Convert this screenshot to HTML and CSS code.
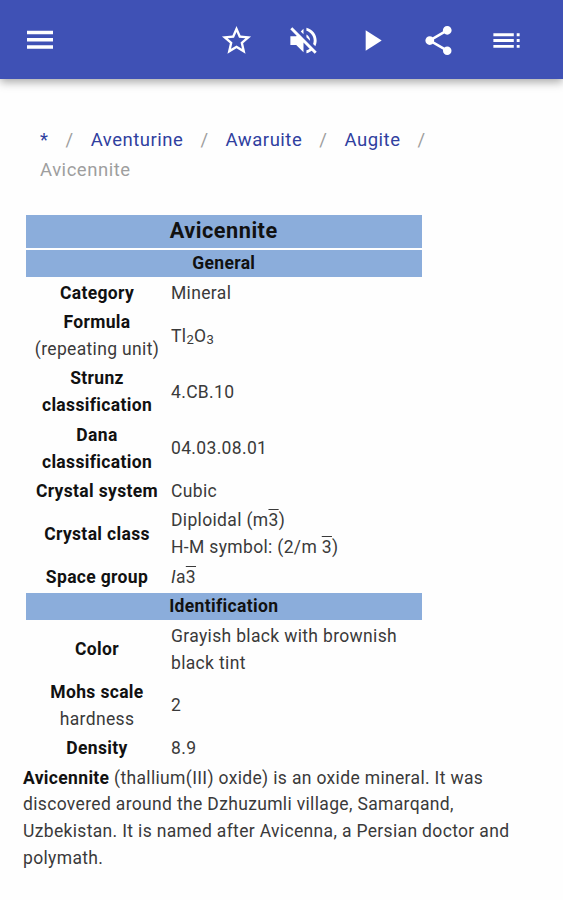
FILE: index.html
```
<!DOCTYPE html>
<html lang="en">
<head>
    <meta charset="UTF-8">
    <meta name="viewport" content="width=device-width, initial-scale=1.0">
    <title>Avicennite</title>
    <link rel="stylesheet" href="styles.css">
</head>
<body>
    <header class="toolbar">
        <button class="menu-button" title="Menu">
            <svg viewBox="0 0 24 24"><path d="M0 3.4h24v3.3H0zM0 10.1h24v3.3H0zM0 16.8h24v3.3H0z"></path></svg>
        </button>
        <div class="actions">
            <button title="Favorite">
                <svg viewBox="0 0 24 24"><path d="M22 9.24l-7.19-.62L12 2 9.19 8.63 2 9.24l5.46 4.73L5.82 21 12 17.27 18.18 21l-1.63-7.03L22 9.24zM12 15.4l-3.76 2.27 1-4.28-3.32-2.88 4.38-.38L12 6.1l1.71 4.04 4.38.38-3.32 2.88 1 4.28L12 15.4z"></path></svg>
            </button>
            <button title="Sound off">
                <svg viewBox="0 0 24 24"><path d="M4.34 2.93L2.93 4.34 7.29 8.7 7 9H3v6h4l5 5v-6.59l4.18 4.18c-.65.49-1.38.88-2.18 1.11v2.06c1.34-.3 2.57-.92 3.61-1.75l2.05 2.05 1.41-1.41L4.34 2.93zM19 12c0 .82-.15 1.61-.41 2.34l1.53 1.53c.56-1.17.88-2.48.88-3.87 0-4.28-2.99-7.86-7-8.77v2.06c2.89.86 5 3.54 5 6.71zM12 4l-1.88 1.88L12 7.76V4zM16.5 12c0-1.77-1.02-3.29-2.5-4.03v1.79l2.48 2.48c.01-.08.02-.16.02-.24z"></path></svg>
            </button>
            <button title="Play">
                <svg viewBox="0 0 24 24"><path d="M8 5v14l11-7z"></path></svg>
            </button>
            <button title="Share">
                <svg viewBox="0 0 24 24"><path d="M18 16.08c-.76 0-1.44.3-1.96.77L8.91 12.7c.05-.23.09-.46.09-.7s-.04-.47-.09-.7l7.05-4.11c.54.5 1.25.81 2.04.81 1.66 0 3-1.34 3-3s-1.34-3-3-3-3 1.34-3 3c0 .24.04.47.09.7L8.04 9.81C7.5 9.31 6.79 9 6 9c-1.66 0-3 1.34-3 3s1.34 3 3 3c.79 0 1.5-.31 2.04-.81l7.12 4.16c-.05.21-.08.43-.08.65 0 1.61 1.31 2.92 2.92 2.92s2.92-1.31 2.92-2.92-1.31-2.92-2.92-2.92z"></path></svg>
            </button>
            <button title="Contents">
                <svg viewBox="0 0 24 24"><path d="M3 9h14V7H3v2zm0 4h14v-2H3v2zm0 4h14v-2H3v2zm16 0h2v-2h-2v2zm0-10v2h2V7h-2zm0 6h2v-2h-2v2z"></path></svg>
            </button>
        </div>
    </header>

    <nav class="breadcrumb">
        <a href="#">*</a><span class="sep">/</span><a href="#">Aventurine</a><span class="sep">/</span><a href="#">Awaruite</a><span class="sep">/</span><a href="#">Augite</a><span class="sep">/</span>
        <div class="current">Avicennite</div>
    </nav>

    <main>
        <div class="infobox">
            <div class="band title">Avicennite</div>
            <div class="band">General</div>
            <div class="label">Category</div>
            <div class="value">Mineral</div>
            <div class="label">Formula<br><span>(repeating unit)</span></div>
            <div class="value">Tl<sub>2</sub>O<sub>3</sub></div>
            <div class="label">Strunz<br>classification</div>
            <div class="value">4.CB.10</div>
            <div class="label">Dana<br>classification</div>
            <div class="value">04.03.08.01</div>
            <div class="label">Crystal system</div>
            <div class="value">Cubic</div>
            <div class="label">Crystal class</div>
            <div class="value">Diploidal (m<span class="bar">3</span>)<br>H-M symbol: (2/m <span class="bar">3</span>)</div>
            <div class="label">Space group</div>
            <div class="value"><i>I</i>a<span class="bar">3</span></div>
            <div class="band">Identification</div>
            <div class="label">Color</div>
            <div class="value">Grayish black with brownish<br>black tint</div>
            <div class="label">Mohs scale<br><span>hardness</span></div>
            <div class="value">2</div>
            <div class="label">Density</div>
            <div class="value">8.9</div>
        </div>
        <p><b>Avicennite</b> (thallium(III) oxide) is an oxide mineral. It was<br>discovered around the Dzhuzumli village, Samarqand,<br>Uzbekistan. It is named after Avicenna, a Persian doctor and<br>polymath.</p>
    </main>
</body>
</html>
```
FILE: styles.css
```
body {
    margin: 0;
    min-height: 100vh;
    background: #fefefe;
    font-family: Roboto, sans-serif;
    font-size: 17.5px;
    line-height: 26.8px;
    letter-spacing: 0.34px;
    color: #3a3a3a;
    overflow: hidden;
}

.toolbar {
    display: flex;
    align-items: center;
    justify-content: space-between;
    height: 79px;
    box-sizing: border-box;
    padding: 1px 39.5px 0 26px;
    background: #3f51b5;
    box-shadow: 0 3px 9px rgba(0, 0, 0, 0.35);
}

.toolbar button {
    display: block;
    padding: 0;
    border: none;
    background: none;
    cursor: pointer;
}

.toolbar svg {
    display: block;
    width: 35px;
    height: 35px;
    fill: #fff;
}

.toolbar .menu-button svg {
    width: 26px;
    height: 26px;
    padding-left: 1px;
}

.actions {
    display: flex;
    gap: 32.5px;
}

.breadcrumb {
    padding: 47px 40px 0;
    line-height: 29.5px;
    font-size: 18.5px;
    letter-spacing: 0.52px;
    color: #9e9e9e;
}

.breadcrumb a {
    color: #303f9f;
    text-decoration: none;
}

.sep {
    margin: 0 17px;
}

main {
    padding: 29.5px 23px 0;
}

.infobox {
    display: grid;
    grid-template-columns: 143px 251px;
    gap: 2.7px 2.5px;
    align-items: center;
    width: 396.5px;
    margin-left: 2.5px;
}

.band {
    grid-column: 1 / 3;
    background: #8baddb;
    color: #111;
    font-weight: bold;
    text-align: center;
}

.title {
    height: 33px;
    font-size: 21.7px;
    line-height: 31px;
    letter-spacing: 0.5px;
}

.label {
    color: #111;
    font-weight: bold;
    text-align: center;
}

.label span {
    color: #3a3a3a;
    font-weight: normal;
}

.bar {
    text-decoration: overline;
}

sub {
    font-size: 75%;
    line-height: 0;
    position: relative;
    bottom: -0.2em;
    vertical-align: baseline;
}

p {
    margin: 2.5px 0 0;
    white-space: nowrap;
}

b {
    color: #111;
}
```
